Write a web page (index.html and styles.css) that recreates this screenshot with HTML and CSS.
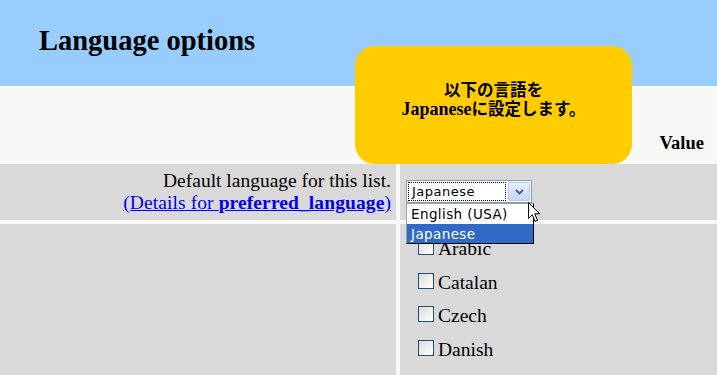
FILE: index.html
```html
<!DOCTYPE html>
<html lang="en">
<head>
  <meta charset="UTF-8">
  <title>Language options</title>
  <link rel="stylesheet" href="styles.css">
</head>
<body>

<div class="page">
  <header class="topbar">
    <h1>Language options</h1>
  </header>

  <div class="colhead">
    <span class="colhead-title">Value</span>
  </div>

  <div class="options">
    <div class="cell label-cell">
      <div>Default language for this list.</div>
      <div><a href="#">(Details for <b>preferred_language</b>)</a></div>
    </div>
    <div class="cell value-cell">
      <div class="select">
        <div class="select-text"><span>Japanese</span></div>
        <div class="select-btn">
          <svg width="9" height="6" viewBox="0 0 9 6"><path d="M1 1 L4.5 4.5 L8 1" fill="none" stroke="#4d6185" stroke-width="2"/></svg>
        </div>
        <ul class="dropdown">
          <li>English (USA)</li>
          <li class="picked">Japanese</li>
        </ul>
      </div>
    </div>

    <div class="cell"></div>
    <div class="cell langs">
      <label class="lang"><span class="box"></span>Arabic</label>
      <label class="lang"><span class="box"></span>Catalan</label>
      <label class="lang"><span class="box"></span>Czech</label>
      <label class="lang"><span class="box"></span>Danish</label>
    </div>
  </div>

  <div class="callout">以下の言語を<br><span class="en">Japanese</span>に設定します。</div>

  <svg class="pointer" width="13" height="21" viewBox="0 0 13 21">
    <path d="M0.5 0.5 L0.5 16.5 L4.3 12.8 L7 19.5 L9.5 18.4 L6.8 11.8 L11.8 11.8 Z" fill="#fff" stroke="#000" stroke-width="1"/>
  </svg>
</div>

</body>
</html>
```

FILE: styles.css
```css
* {
  box-sizing: border-box;
}

body {
  margin: 0;
  padding: 0;
  font-family: "Liberation Serif", "Noto Sans CJK JP", serif;
  background: #f8f8f8;
  overflow: hidden;
}

.page {
  position: relative;
  height: 375px;
}

.topbar {
  height: 86px;
  background: #99ccff;
  padding: 25px 0 0 39px;
}

.topbar h1 {
  margin: 0;
  font-size: 28.5px;
  line-height: 32px;
  font-weight: bold;
}

.colhead {
  height: 78px;
  background: #f8f8f6;
  display: flex;
  justify-content: flex-end;
  align-items: flex-end;
  padding: 0 13px 11px 0;
}

.colhead-title {
  font-size: 18.5px;
  line-height: 20px;
  font-weight: bold;
}

.options {
  display: grid;
  grid-template-columns: 396px 1fr;
  grid-template-rows: 56px 1fr;
  gap: 4px;
  height: 211px;
  background: #f8f8f8;
}

.cell {
  background: #d9d9d9;
}

.label-cell {
  text-align: right;
  padding: 6px 5px 0 0;
  font-size: 19.5px;
  line-height: 22px;
}

.label-cell a {
  color: #0000ee;
  letter-spacing: 0.1px;
}

.value-cell {
  padding: 16px 0 0 6px;
}

/* fake select, drawn open */
.select {
  position: relative;
  width: 126px;
  height: 23px;
  border: 1px solid #7f9db9;
  background: #fff;
  display: flex;
  padding: 1px;
  font-family: "DejaVu Sans", sans-serif;
  font-size: 13px;
}

.select-text {
  flex: 1;
  border: 1px dotted #000;
  padding-left: 3px;
  line-height: 17px;
  letter-spacing: 0.5px;
}

.select-btn {
  width: 22px;
  margin-left: 2px;
  border: 1px solid #b1c7f0;
  border-radius: 2px;
  background: linear-gradient(#e8f0fe, #c2d5fb);
  display: flex;
  align-items: center;
  justify-content: center;
}

.dropdown {
  position: absolute;
  top: 22px;
  left: -1px;
  width: 128px;
  margin: 0;
  padding: 0;
  list-style: none;
  background: #fff;
  border: 1px solid #000;
  border-left-color: #a0a0a0;
  border-top-color: #a0a0a0;
  font-size: 13.5px;
  letter-spacing: 0.4px;
}

.dropdown li {
  height: 19.5px;
  line-height: 20px;
  padding-left: 4px;
}

.dropdown li.picked {
  background: #316ac5;
  color: #fff;
}

.langs {
  padding: 8px 0 0 18px;
}

.lang {
  display: block;
  font-size: 19.5px;
  line-height: 33.6px;
}

.box {
  display: inline-block;
  width: 16px;
  height: 16px;
  margin-right: 4px;
  border: 1px solid #1c5180;
  background: linear-gradient(135deg, #dcdcd5, #fff);
}

.callout {
  position: absolute;
  left: 355px;
  top: 46px;
  width: 277px;
  height: 118px;
  border-radius: 20px;
  background: #ffcc00;
  padding-top: 35px;
  text-align: center;
  font-size: 16.5px;
  line-height: 19px;
  font-weight: bold;
}

.callout .en {
  font-size: 18px;
}

.pointer {
  position: absolute;
  left: 528px;
  top: 202px;
}
```
